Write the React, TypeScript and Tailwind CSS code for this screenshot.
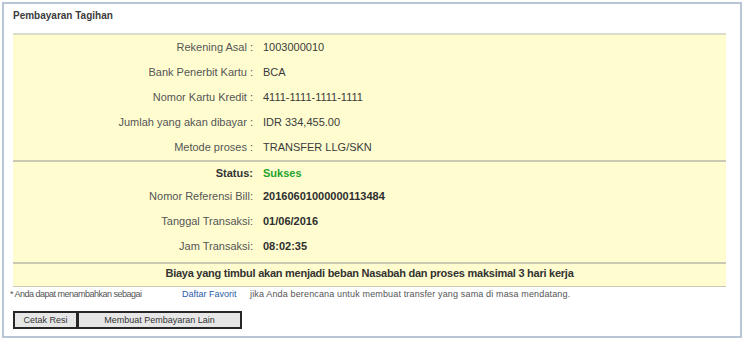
import React from 'react';

const font = { fontFamily: '"Liberation Sans", Arial, sans-serif' };

const detailRows = [
  { label: 'Rekening Asal :', value: '1003000010' },
  { label: 'Bank Penerbit Kartu :', value: 'BCA' },
  { label: 'Nomor Kartu Kredit :', value: '4111-1111-1111-1111' },
  { label: 'Jumlah yang akan dibayar :', value: 'IDR 334,455.00' },
  { label: 'Metode proses :', value: 'TRANSFER LLG/SKN' },
];

const resultRows = [
  { label: 'Nomor Referensi Bill:', value: '20160601000000113484' },
  { label: 'Tanggal Transaksi:', value: '01/06/2016' },
  { label: 'Jam Transaksi:', value: '08:02:35' },
];

const App: React.FC = () => {
  return (
    <div className="w-[745px] h-[345px] bg-white pt-[2px] pl-[2px]" style={font}>
      <div className="w-[740px] h-[336px] border-2 border-[#b9c5d5] pl-[9px] pr-[14px]">
        {/* title */}
        <div className="h-[29px] pt-[5px] text-[10px] leading-[14px] font-bold text-[#3c3c3c]">
          Pembayaran Tagihan
        </div>

        {/* yellow summary panel */}
        <div className="bg-[#fffdd0] border-t-2 border-[#dcdccb] text-[11px] text-[#3a3a3a]">
          {detailRows.map((row) => (
            <div key={row.label} className="grid grid-cols-[240px_1fr] h-[25px] items-center">
              <span className="text-right text-[#555]">{row.label}</span>
              <span className="pl-[10px]">{row.value}</span>
            </div>
          ))}

          <div className="border-t-2 border-[#c9c9b4] pb-[3px]">
            <div className="grid grid-cols-[240px_1fr] h-[22px] items-center">
              <span className="text-right font-bold text-[#333]">Status:</span>
              <span className="pl-[10px] font-bold text-[#26a32c]">Sukses</span>
            </div>
            {resultRows.map((row) => (
              <div key={row.label} className="grid grid-cols-[240px_1fr] h-[25px] items-center">
                <span className="text-right text-[#555]">{row.label}</span>
                <span className="pl-[10px] font-bold text-[#2e2e2e]">{row.value}</span>
              </div>
            ))}
          </div>

          <div className="h-[25px] border-t-2 border-b border-[#c9c9b4] pb-[3px] flex items-center justify-center font-bold tracking-[-0.25px] text-[#333]">
            Biaya yang timbul akan menjadi beban Nasabah dan proses maksimal 3 hari kerja
          </div>
        </div>

        {/* footnote */}
        <div className="h-[12px] flex items-center text-[9px] leading-[12px] text-[#555] -ml-[3px] mt-[1px]">
          <span className="w-[172px] tracking-[-0.5px]">* Anda dapat menambahkan sebagai</span>
          <span className="w-[68px] text-[#2d5ca8]">Daftar Favorit</span>
          <span className="tracking-[0.15px]">jika Anda berencana untuk membuat transfer yang sama di masa mendatang.</span>
        </div>

        {/* buttons */}
        <div className="flex mt-[11px]">
          <button className="w-[65px] h-[18px] border-2 border-[#262626] bg-[#e6e6e6] text-[9px] text-[#333] leading-none">
            Cetak Resi
          </button>
          <button className="w-[164px] h-[18px] border-2 border-l border-[#262626] bg-[#e6e6e6] text-[9px] text-[#333] leading-none">
            Membuat Pembayaran Lain
          </button>
        </div>
      </div>
    </div>
  );
};

export default App;
